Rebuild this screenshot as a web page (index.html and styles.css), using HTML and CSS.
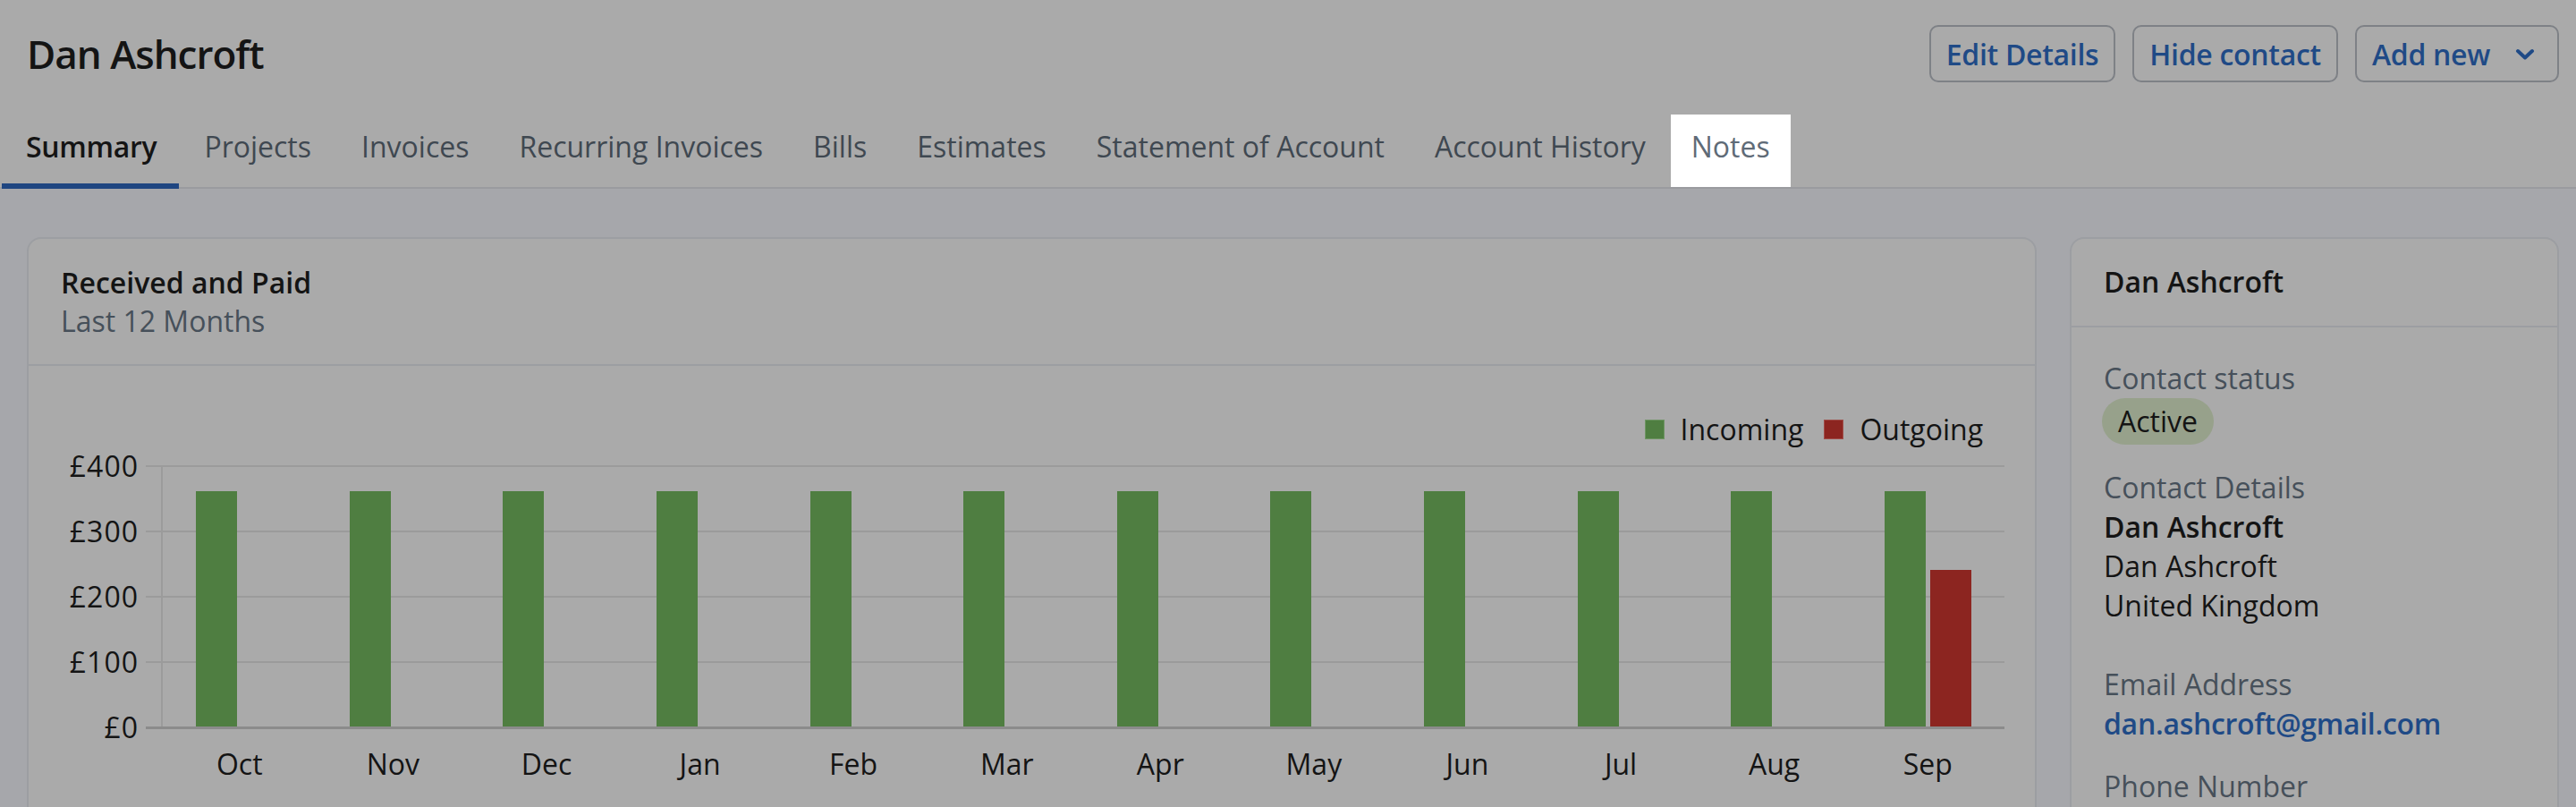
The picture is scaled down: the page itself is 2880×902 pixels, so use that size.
FILE: index.html
```html
<!DOCTYPE html>
<html lang="en">
<head>
<meta charset="utf-8">
<title>Dan Ashcroft</title>
<link rel="stylesheet" href="styles.css">
</head>
<body>
<div class="page">
  <header class="topbar">
    <h1 class="title">Dan Ashcroft</h1>
    <div class="actions">
      <button class="btn">Edit Details</button>
      <button class="btn">Hide contact</button>
      <button class="btn btn-dropdown">Add new
        <svg class="chev" width="22" height="13" viewBox="0 0 22 13"><polyline points="3,3 11,10.5 19,3" fill="none" stroke="#1f4a86" stroke-width="4" stroke-linecap="round" stroke-linejoin="round"/></svg>
      </button>
    </div>
  </header>

  <nav class="tabs">
    <a class="tab active">Summary</a>
    <a class="tab">Projects</a>
    <a class="tab">Invoices</a>
    <a class="tab">Recurring Invoices</a>
    <a class="tab">Bills</a>
    <a class="tab">Estimates</a>
    <a class="tab">Statement of Account</a>
    <a class="tab">Account History</a>
    <a class="tab spotlight">Notes</a>
  </nav>

  <main class="content">
    <section class="card chart-card">
      <div class="card-header">
        <div class="card-title">Received and Paid</div>
        <div class="card-sub">Last 12 Months</div>
      </div>
      <div class="chart">
        <div class="legend">
          <span class="legend-item"><span class="swatch swatch-in"></span>Incoming</span>
          <span class="legend-item"><span class="swatch swatch-out"></span>Outgoing</span>
        </div>
        <div class="plot-row">
          <div class="y-labels">
            <span class="y-label">£400</span>
            <span class="y-label">£300</span>
            <span class="y-label">£200</span>
            <span class="y-label">£100</span>
            <span class="y-label">£0</span>
          </div>
          <div class="plot">
            <div class="bars">
              <div class="group"><span class="bar bar-in" style="height:263px"></span><span class="bar bar-out" style="height:0px"></span></div>
              <div class="group"><span class="bar bar-in" style="height:263px"></span><span class="bar bar-out" style="height:0px"></span></div>
              <div class="group"><span class="bar bar-in" style="height:263px"></span><span class="bar bar-out" style="height:0px"></span></div>
              <div class="group"><span class="bar bar-in" style="height:263px"></span><span class="bar bar-out" style="height:0px"></span></div>
              <div class="group"><span class="bar bar-in" style="height:263px"></span><span class="bar bar-out" style="height:0px"></span></div>
              <div class="group"><span class="bar bar-in" style="height:263px"></span><span class="bar bar-out" style="height:0px"></span></div>
              <div class="group"><span class="bar bar-in" style="height:263px"></span><span class="bar bar-out" style="height:0px"></span></div>
              <div class="group"><span class="bar bar-in" style="height:263px"></span><span class="bar bar-out" style="height:0px"></span></div>
              <div class="group"><span class="bar bar-in" style="height:263px"></span><span class="bar bar-out" style="height:0px"></span></div>
              <div class="group"><span class="bar bar-in" style="height:263px"></span><span class="bar bar-out" style="height:0px"></span></div>
              <div class="group"><span class="bar bar-in" style="height:263px"></span><span class="bar bar-out" style="height:0px"></span></div>
              <div class="group"><span class="bar bar-in" style="height:263px"></span><span class="bar bar-out" style="height:175px"></span></div>
            </div>
          </div>
        </div>
        <div class="x-labels">
          <span>Oct</span><span>Nov</span><span>Dec</span><span>Jan</span><span>Feb</span><span>Mar</span>
          <span>Apr</span><span>May</span><span>Jun</span><span>Jul</span><span>Aug</span><span>Sep</span>
        </div>
      </div>
    </section>

    <aside class="card contact-card">
      <div class="card-header contact-header">
        <div class="card-title">Dan Ashcroft</div>
      </div>
      <div class="contact-body">
        <div class="group-field">
          <div class="field-label">Contact status</div>
          <span class="pill">Active</span>
        </div>
        <div class="group-field group-address">
          <div class="field-label">Contact Details</div>
          <div class="field-strong">Dan Ashcroft</div>
          <div class="field-value">Dan Ashcroft</div>
          <div class="field-value">United Kingdom</div>
        </div>
        <div class="group-field">
          <div class="field-label">Email Address</div>
          <a class="field-link">dan.ashcroft@gmail.com</a>
        </div>
        <div class="group-field">
          <div class="field-label">Phone Number</div>
          <div class="field-value">&nbsp;</div>
        </div>
      </div>
    </aside>
  </main>
</div>
</body>
</html>
```

FILE: styles.css
```css
* {
  box-sizing: border-box;
}

body {
  margin: 0;
  background: #a6a7ab;
  font-family: "Open Sans", "Liberation Sans", sans-serif;
  font-size: 32px;
  line-height: 44px;
  color: #151515;
}

.topbar {
  display: flex;
  align-items: center;
  justify-content: space-between;
  height: 128px;
  padding: 0 19px 8px 30px;
  background: #aaaaaa;
}

.title {
  margin: 0;
  font-size: 44px;
  line-height: 60px;
  font-weight: 600;
  letter-spacing: -1px;
  color: #141414;
}

.actions {
  display: flex;
  gap: 19px;
}

.btn {
  display: inline-flex;
  align-items: center;
  gap: 28px;
  height: 64px;
  padding: 0 17px;
  border: 2px solid #7e8186;
  border-radius: 10px;
  background: transparent;
  color: #1f4a86;
  font-family: "Open Sans", "Liberation Sans", sans-serif;
  font-size: 32px;
  font-weight: 600;
  letter-spacing: -0.3px;
}

.btn-dropdown {
  padding-right: 25px;
}

.chev {
  display: block;
}

.tabs {
  display: flex;
  padding-left: 2px;
  background: #aaaaaa;
  border-bottom: 2px solid #9a9b9f;
}

.tab {
  position: relative;
  padding: 14px 28px 23px;
  color: #3f4851;
  white-space: nowrap;
}

.tab.active {
  color: #141414;
  font-weight: 600;
  letter-spacing: -0.3px;
  padding-left: 27px;
  padding-right: 25px;
}

.tab.active::after {
  content: "";
  position: absolute;
  left: 0;
  right: 0;
  bottom: -2px;
  height: 6px;
  background: #1f4681;
}

.tab.spotlight {
  background: #ffffff;
  color: #5f6b77;
  padding-left: 23px;
  padding-right: 23px;
}

.content {
  display: grid;
  grid-template-columns: 1fr 547px;
  column-gap: 37px;
  align-items: start;
  padding: 54px 19px 0 30px;
}

.card {
  background: #aaaaaa;
  border: 2px solid #9c9ea2;
  border-radius: 16px;
}

.card-header {
  padding: 27px 36px;
  border-bottom: 2px solid #9c9ea2;
  line-height: 43px;
}

.card-title {
  font-weight: 600;
  color: #141414;
}

.card-sub {
  color: #46505a;
}

.chart {
  padding: 49px 34px 60px 36px;
}

.legend {
  display: flex;
  justify-content: flex-end;
  gap: 23px;
  margin-right: 24px;
  color: #141414;
}

.legend-item {
  display: flex;
  align-items: center;
  gap: 18px;
}

.swatch {
  width: 22px;
  height: 22px;
  border: 1px solid rgba(255, 255, 255, 0.18);
}

.swatch-in {
  background: #4f7e41;
}

.swatch-out {
  background: #8c2520;
}

.plot-row {
  display: grid;
  grid-template-columns: 87px 1fr;
  column-gap: 8px;
  margin-top: 18px;
}

.y-labels {
  display: flex;
  flex-direction: column;
  justify-content: space-between;
  height: 295px;
  padding-bottom: 1px;
  letter-spacing: 1px;
}

.y-label {
  display: flex;
  align-items: center;
  justify-content: flex-end;
  height: 2px;
  color: #141414;
}

.plot {
  height: 295px;
  padding-left: 17px;
  border-bottom: 3px solid #8b8b8b;
  background: repeating-linear-gradient(to bottom, #9b9b9b 0, #9b9b9b 2px, transparent 2px, transparent 73px);
}

.bars {
  display: grid;
  grid-template-columns: repeat(12, 1fr);
  height: 100%;
  border-left: 2px solid #9b9b9b;
}

.group {
  display: flex;
  justify-content: center;
  align-items: flex-end;
  gap: 5px;
}

.bar {
  width: 46px;
}

.bar-in {
  background: #4f7e41;
}

.bar-out {
  background: #8c2520;
}

.x-labels {
  display: grid;
  grid-template-columns: repeat(12, 1fr);
  margin: 17px 0 0 114px;
  text-align: center;
  color: #141414;
}

.contact-header {
  padding: 26px 36px 27px;
  line-height: 44px;
}

.contact-body {
  display: flex;
  flex-direction: column;
  gap: 26px;
  padding: 35px 36px 60px;
}

.group-field {
  display: flex;
  flex-direction: column;
  align-items: flex-start;
}

.group-address {
  margin-bottom: 18px;
}

.field-label {
  color: #46505a;
}

.field-strong {
  font-weight: 600;
  color: #141414;
}

.field-value {
  color: #141414;
}

.field-link {
  color: #1f4a86;
  font-weight: 600;
  letter-spacing: -0.3px;
}

.pill {
  margin-left: -2px;
  padding: 0 18px;
  line-height: 52px;
  border-radius: 26px;
  background: #97a18b;
  color: #141414;
}
```
